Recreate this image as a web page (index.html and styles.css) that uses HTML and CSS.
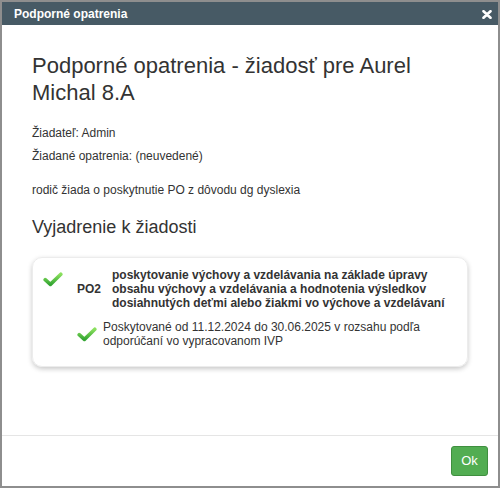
FILE: index.html
```html
<!DOCTYPE html>
<html lang="sk">
<head>
<meta charset="utf-8">
<title>Podporné opatrenia</title>
<link rel="stylesheet" href="styles.css">
</head>
<body>
<div class="dialog">
  <div class="dialog-header">
    <span class="dialog-title">Podporné opatrenia</span>
    <svg class="close" width="10" height="9" viewBox="0 0 10 9" aria-label="Zavrieť">
      <path d="M1.5 1.2 L8.5 7.8 M8.5 1.2 L1.5 7.8" stroke="#fff" stroke-width="2.6" stroke-linecap="round"/>
    </svg>
  </div>
  <div class="dialog-body">
    <h3 class="title">Podporné opatrenia - žiadosť pre Aurel Michal 8.A</h3>
    <p class="meta first">Žiadateľ: Admin</p>
    <p class="meta">Žiadané opatrenia: (neuvedené)</p>
    <p class="meta note">rodič žiada o poskytnutie PO z dôvodu dg dyslexia</p>
    <h4 class="subtitle">Vyjadrenie k žiadosti</h4>
    <div class="card">
      <div class="row main">
        <div class="icon-cell">
          <svg class="check" width="20" height="15" viewBox="0 0 20 15">
            <defs>
              <linearGradient id="g1" x1="0" y1="0" x2="0" y2="1">
                <stop offset="0" stop-color="#8be05e"/>
                <stop offset="1" stop-color="#33a532"/>
              </linearGradient>
            </defs>
            <path d="M2.2 7.6 L7.4 12.4 L17.8 2.2" fill="none" stroke="url(#g1)" stroke-width="3.6" stroke-linecap="round" stroke-linejoin="round"/>
          </svg>
        </div>
        <div class="code">PO2</div>
        <div class="desc">poskytovanie výchovy a vzdelávania na základe úpravy obsahu výchovy a vzdelávania a hodnotenia výsledkov dosiahnutých deťmi alebo žiakmi vo výchove a vzdelávaní</div>
      </div>
      <div class="row sub">
        <svg class="check" width="20" height="15" viewBox="0 0 20 15">
          <defs>
            <linearGradient id="g2" x1="0" y1="0" x2="0" y2="1">
              <stop offset="0" stop-color="#8be05e"/>
              <stop offset="1" stop-color="#33a532"/>
            </linearGradient>
          </defs>
          <path d="M2.2 7.6 L7.4 12.4 L17.8 2.2" fill="none" stroke="url(#g2)" stroke-width="3.6" stroke-linecap="round" stroke-linejoin="round"/>
        </svg>
        <div class="sub-text">Poskytované od 11.12.2024 do 30.06.2025 v rozsahu podľa odporúčaní vo vypracovanom IVP</div>
      </div>
    </div>
  </div>
  <div class="dialog-footer">
    <button class="btn-ok" type="button">Ok</button>
  </div>
</div>
</body>
</html>
```

FILE: styles.css
```css
html, body {
  margin: 0;
  padding: 0;
  background: #fff;
}

body {
  font-family: "Liberation Sans", Arial, sans-serif;
  color: #333;
}

.dialog {
  width: 500px;
  height: 488px;
  box-sizing: border-box;
  border: 2px solid #8e8e8e;
  display: flex;
  flex-direction: column;
  background: #fff;
}

.dialog-header {
  height: 23px;
  flex: none;
  background: #475a65;
  display: flex;
  align-items: center;
  justify-content: space-between;
  padding: 0 6px 0 12px;
}

.dialog-title {
  color: #fff;
  font-weight: bold;
  font-size: 12px;
  line-height: 14px;
}

.close {
  display: block;
  margin-top: 1px;
}

.dialog-body {
  flex: 1;
  padding: 0 30px;
}

.title {
  margin: 27px 0 0;
  font-size: 22px;
  line-height: 27px;
  font-weight: normal;
  color: #333;
}

.meta {
  margin: 6px 0 0;
  font-size: 12px;
  line-height: 17px;
}

.meta.first {
  margin-top: 19px;
}

.meta.note {
  margin-top: 17px;
}

.subtitle {
  margin: 18px 0 0;
  font-size: 18px;
  line-height: 20px;
  font-weight: normal;
  color: #333;
}

.card {
  margin-top: 20px;
  border: 1px solid #ececec;
  border-radius: 10px;
  box-shadow: 0 2px 5px rgba(0, 0, 0, 0.22);
  padding: 10px 10px 18px;
}

.row {
  display: flex;
}

.row.main {
  align-items: stretch;
}

.icon-cell {
  width: 34px;
  flex: none;
  padding-top: 4px;
}

.check {
  display: block;
}

.code {
  width: 35px;
  flex: none;
  align-self: center;
  font-weight: bold;
  font-size: 12px;
  line-height: 14px;
}

.desc {
  flex: 1;
  font-weight: bold;
  font-size: 12px;
  line-height: 14px;
}

.row.sub {
  margin-top: 10px;
  padding-left: 34px;
  align-items: center;
}

.row.sub .check {
  margin-right: 6px;
  flex: none;
}

.sub-text {
  flex: 1;
  font-size: 12px;
  line-height: 14px;
}

.dialog-footer {
  flex: none;
  border-top: 1px solid #e5e5e5;
  padding: 10px;
  display: flex;
  justify-content: flex-end;
}

.btn-ok {
  width: 37px;
  height: 30px;
  padding: 0;
  box-sizing: border-box;
  background: #52ad52;
  border: 1px solid #3f8f3f;
  border-radius: 3px;
  color: #fff;
  font-family: "Liberation Sans", Arial, sans-serif;
  font-size: 13px;
  line-height: 28px;
  cursor: pointer;
}
```
